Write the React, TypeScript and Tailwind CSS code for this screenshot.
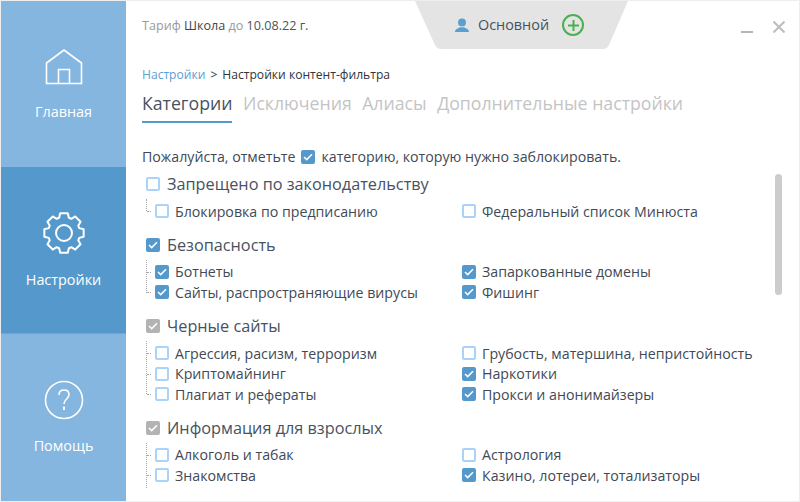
import React from "react";

type Item = { label: string; checked?: boolean };
type Group = { title: string; state: "off" | "on" | "mixed"; tail?: boolean; left: Item[]; right: Item[] };

const groups: Group[] = [
  {
    title: "Запрещено по законодательству",
    state: "off",
    left: [{ label: "Блокировка по предписанию" }],
    right: [{ label: "Федеральный список Минюста" }],
  },
  {
    title: "Безопасность",
    state: "on",
    left: [{ label: "Ботнеты", checked: true }, { label: "Сайты, распространяющие вирусы", checked: true }],
    right: [{ label: "Запаркованные домены", checked: true }, { label: "Фишинг", checked: true }],
  },
  {
    title: "Черные сайты",
    state: "mixed",
    left: [{ label: "Агрессия, расизм, терроризм" }, { label: "Криптомайнинг" }, { label: "Плагиат и рефераты" }],
    right: [
      { label: "Грубость, матершина, непристойность" },
      { label: "Наркотики", checked: true },
      { label: "Прокси и анонимайзеры", checked: true },
    ],
  },
  {
    title: "Информация для взрослых",
    state: "mixed",
    tail: true,
    left: [{ label: "Алкоголь и табак" }, { label: "Знакомства" }],
    right: [{ label: "Астрология" }, { label: "Казино, лотереи, тотализаторы", checked: true }],
  },
];

function Box({ state }: { state: "off" | "on" | "mixed" }) {
  if (state === "off") {
    return <span className="block h-[14px] w-[14px] shrink-0 rounded-[2px] border-2 border-[#a9d3fa] bg-white" />;
  }
  return (
    <span className={`flex h-[14px] w-[14px] shrink-0 items-center justify-center rounded-[2px] ${state === "on" ? "bg-[#5599cc]" : "bg-[#b3b3b3]"}`}>
      <svg width="10" height="8" viewBox="0 0 10 8" fill="none">
        <path d="M1 4l2.700 2.600L9 1.200" stroke="#fff" strokeWidth="1.500" />
      </svg>
    </span>
  );
}

function Row({ item, tick }: { item: Item; tick?: boolean }) {
  return (
    <div className="relative flex h-[20.4px] items-center gap-[6px]">
      {tick && <span className="absolute top-[10px] left-[-8px] w-[4px] border-t border-dotted border-[#a8a8a8]" />}
      <Box state={item.checked ? "on" : "off"} />
      <span className="text-[14.2px] whitespace-nowrap text-[#3f4a56]">{item.label}</span>
    </div>
  );
}

function NavItem({ label, height, labelGap, active, children }: { label: string; height: string; labelGap: string; active?: boolean; children: React.ReactNode }) {
  return (
    <div className={`flex flex-col items-center ${height} ${active ? "bg-[#5599cc]" : "bg-[#85b6e0]"}`}>
      <div className="mt-[41px] flex h-[50px] items-center justify-center">{children}</div>
      <span className={`${labelGap} text-[14.4px] leading-[20px] text-white`}>{label}</span>
    </div>
  );
}

// outline of the cog, 8 teeth round the centre of a 44 box
const gearPath = Array.from({ length: 8 }, (_, i) => {
  const a = (i * Math.PI) / 4 - Math.PI / 2;
  const pt = (r: number, d: number) => `${(22 + r * Math.cos(a + d)).toFixed(2)} ${(22 + r * Math.sin(a + d)).toFixed(2)}`;
  return `${i === 0 ? "M" : "L"}${pt(16, -0.31)}L${pt(20, -0.19)}L${pt(20, 0.19)}L${pt(16, 0.31)}`;
}).join("") + "Z";

function GearIcon() {
  return (
    <svg width="44" height="44" viewBox="0 0 44 44" fill="none" stroke="#fff" strokeWidth="2" strokeLinejoin="round">
      <circle cx="22" cy="22" r="8" />
      <path d={gearPath} />
    </svg>
  );
}

export default function App() {
  return (
    <div className="flex h-[502px] w-[800px] overflow-hidden border border-[#eeeeee] bg-white font-['Open_Sans',sans-serif]">
      <div className="flex w-[125px] shrink-0 flex-col">
        <NavItem label="Главная" height="h-[166px]" labelGap="mt-[10px]">
          <svg width="38" height="36" viewBox="0 0 38 36" fill="none" stroke="#fff" strokeWidth="1.600">
            <path d="M1.500 34.500V14L19 1l17.500 13v20.500z" />
            <path d="M13.500 34.500V20.500h11v14" />
          </svg>
        </NavItem>
        <NavItem label="Настройки" height="h-[167px]" labelGap="mt-[12px]" active>
          <GearIcon />
        </NavItem>
        <div className="h-px bg-[#6fa5d6]" />
        <NavItem label="Помощь" height="h-[167px]" labelGap="mt-[11px]">
          <svg width="40" height="40" viewBox="0 0 40 40" fill="none" stroke="#fff" strokeWidth="1.600">
            <circle cx="20" cy="20" r="18.500" />
            <path d="M15 15c0-3.200 2-5 5-5s5 1.800 5 4.600c0 4.400-5 4.400-5 9.400" />
            <path d="M20 26.500v3.500" strokeWidth="2" />
          </svg>
        </NavItem>
      </div>

      <div className="relative flex min-w-0 flex-1 flex-col">
        <div className="flex h-[48px] shrink-0 items-start">
          <div className="w-[289px] pt-[16px] pl-[16px] text-[12.6px] whitespace-nowrap text-[#9a9a9a]">
            Тариф <span className="text-[#3c4650]">Школа</span> до <span className="text-[#4c5560]">10.08.22 г.</span>
          </div>
          <div className="relative flex h-[48px] w-[213px] items-center pl-[40px]">
            <svg className="absolute inset-0" width="213" height="48" viewBox="0 0 213 48">
              <path d="M0 0H213L194 44Q192 48 188 48H26Q22 48 20 44Z" fill="#e4e4e4" />
            </svg>
            <div className="relative flex items-center">
              <svg width="14" height="14" viewBox="0 0 16 16" fill="#5a9fd0">
                <circle cx="8" cy="5" r="4.500" />
                <path d="M0 16c0-3.500 3.500-4 5.500-5.500h5c2 1.500 5.500 2 5.500 5.500z" />
              </svg>
              <span className="ml-[9px] text-[14.4px] text-[#47525f]">Основной</span>
              <span className="ml-[13px] flex h-[22px] w-[22px] items-center justify-center rounded-full border-2 border-[#4caf50]">
                <svg width="11" height="11" viewBox="0 0 11 11" stroke="#4caf50" strokeWidth="2">
                  <path d="M5.500 0v11M0 5.500h11" />
                </svg>
              </span>
            </div>
          </div>
          <div className="ml-auto flex items-center gap-[20px] pt-[19px] pr-[14px]">
            <span className="mt-[11px] block h-[2px] w-[12px] bg-[#b5b5b5]" />
            <svg width="12" height="12" viewBox="0 0 12 12" stroke="#bdbdbd" strokeWidth="2">
              <path d="M.5.500l11 11M11.500.500l-11 11" />
            </svg>
          </div>
        </div>

        <div className="px-[16px] pt-[16px]">
          <div className="text-[12.1px] leading-[20px] whitespace-nowrap text-[#2e3640]">
            <span className="text-[#5ea0d2]">Настройки</span>
            <span className="mx-[5px]">&gt;</span>
            Настройки контент-фильтра
          </div>
          <div className="mt-[6px] flex items-start gap-[10.5px] text-[17.7px] leading-[24px] whitespace-nowrap text-[#c4c4c4]">
            <span className="border-b-[2px] border-[#5599cc] pb-[6px] text-[#47525f]">Категории</span>
            <span>Исключения</span>
            <span>Алиасы</span>
            <span>Дополнительные настройки</span>
          </div>
          <div className="mt-[24px] flex items-center text-[14.2px] leading-[20px] whitespace-nowrap text-[#3f4a56]">
            Пожалуйста, отметьте
            <span className="mx-[6px]"><Box state="on" /></span>
            категорию, которую нужно заблокировать.
          </div>
        </div>

        <div className="relative min-h-0 flex-1 overflow-hidden pt-[6.5px] pl-[20px]">
          {groups.map((g) => (
            <div key={g.title} className="mb-[13px]">
              <div className="flex h-[21px] items-center gap-[7px]">
                <Box state={g.state} />
                <span className="text-[16.25px] whitespace-nowrap text-[#47525f]">{g.title}</span>
              </div>
              <div className="relative mt-[6.5px] flex pl-[9px]">
                <span className={`absolute top-[-2px] left-0 border-l border-dotted border-[#a8a8a8] ${g.tail ? "bottom-[-2px]" : "bottom-[10px]"}`} />
                <div className="w-[307px]">
                  {g.left.map((i) => <Row key={i.label} item={i} tick />)}
                </div>
                <div>
                  {g.right.map((i) => <Row key={i.label} item={i} />)}
                </div>
              </div>
            </div>
          ))}
          <div className="absolute top-[7px] right-[17px] h-[121px] w-[7px] rounded-full bg-[#cccccc]" />
        </div>
      </div>
    </div>
  );
}
